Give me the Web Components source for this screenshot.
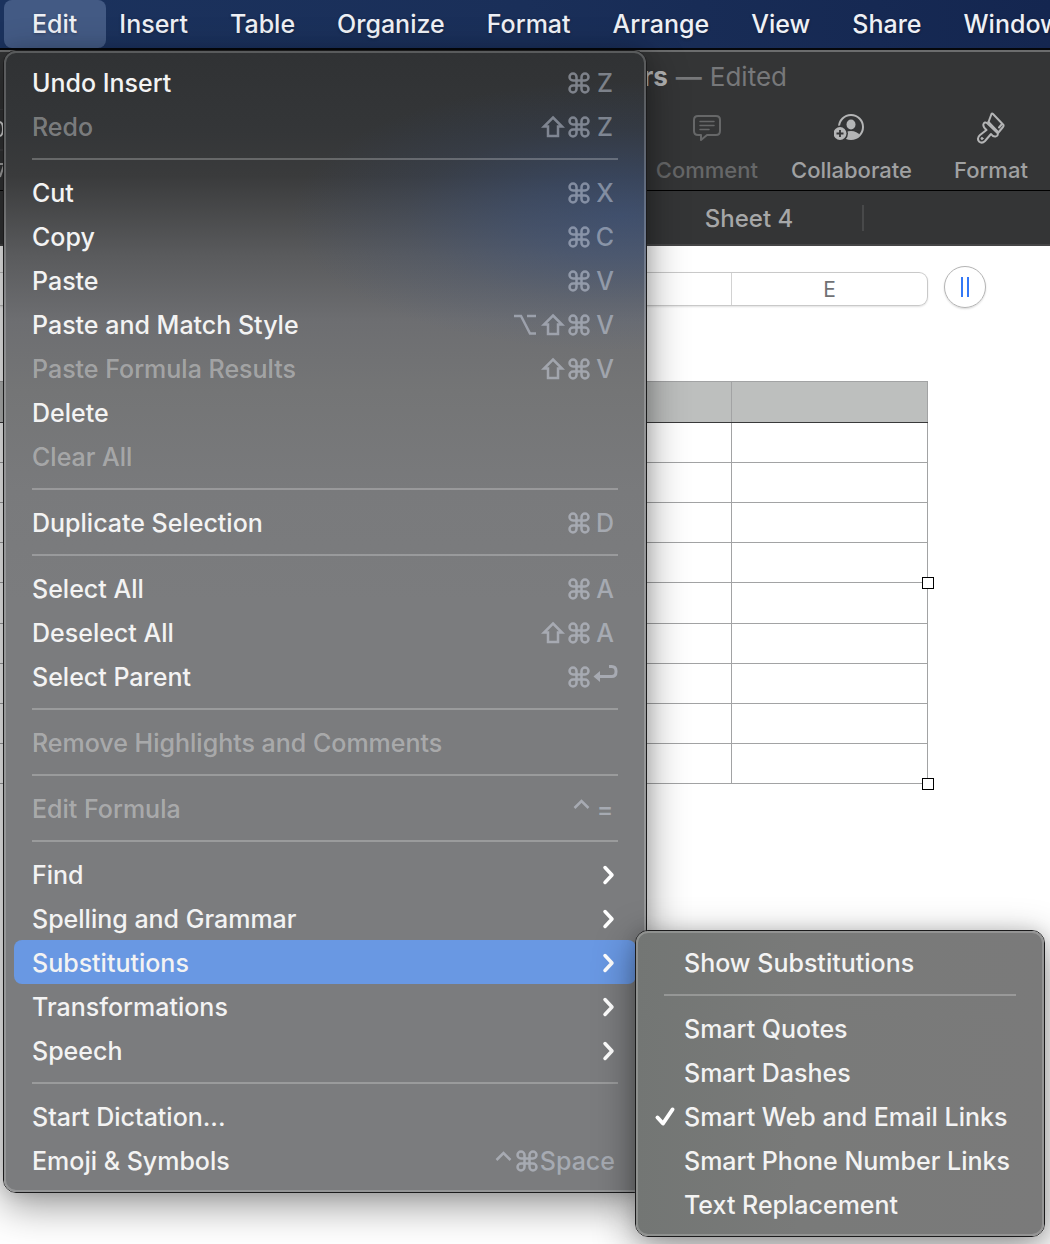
<!DOCTYPE html>
<html lang="en">
<head>
<meta charset="utf-8">
<title>Spreadsheet</title>
<style>
html,body{margin:0;min-height:100%;background:#fff;overflow-x:hidden}
body{font-family:Inter,"Liberation Sans",sans-serif;font-size:25px;line-height:30px;min-height:100vh}
</style>
</head>
<body>
<sheet-app></sheet-app>
<script>
const define=(name,html,setup)=>{
  const template=document.createElement('template');
  template.innerHTML=html;
  customElements.define(name,class extends HTMLElement{
    constructor(){super();this.attachShadow({mode:'open'}).append(template.content.cloneNode(true));}
    connectedCallback(){if(setup)setup(this,this.shadowRoot);}
  });
};
const reset='*{box-sizing:border-box}button{font:inherit;color:inherit;background:none;border:0;padding:0;margin:0;text-align:left;white-space:nowrap}';

/* one title in the menu bar */
define('bar-item',`<style>${reset}
:host{display:block;flex:none;margin-right:-15px}
button{display:block;height:48px;padding:0 29px 0 28px;border-radius:8px;font-weight:500;color:#eef0f5;text-shadow:0 1px 3px rgba(0,0,0,.3)}
:host([open]) button{background:#435a84}
</style><button type="button" aria-haspopup="menu"><slot></slot></button>`);

define('menu-bar',`<style>${reset}
:host{display:block;background:linear-gradient(90deg,#1b325d,#1a2f59 50%,#142650);border-bottom:2px solid #05070b;overflow:hidden}
nav{display:flex;height:48px;padding-left:4px}
</style><nav aria-label="Menu bar"><slot></slot></nav>`);

/* icon over a caption */
define('tool-button',`<style>${reset}
:host{display:block;flex:none;color:#b4b5b6}
:host([disabled]){color:#666768}
button{display:flex;flex-direction:column;align-items:center;gap:11px;min-width:92px;font-size:22px;line-height:28px;font-weight:500}
:host(:not([disabled])) .caption{color:#a0a1a2}
::slotted(svg){display:block;width:36px;height:36px}
</style><button type="button"><slot name="icon"></slot><span class="caption"><slot></slot></span></button>`,
(el,root)=>{root.querySelector('button').disabled=el.hasAttribute('disabled');});

define('window-header',`<style>${reset}
:host{display:block;background:#343536;border-top:2px solid #6c6d6e;border-bottom:1px solid #000;overflow:hidden}
.title{display:flex;justify-content:flex-end;gap:8px;height:50px;align-items:center;padding-right:263px;font-size:26px;color:#77787a}
b{color:#b2b3b4;font-weight:700}
.dash{font-weight:600}
.tools{display:flex;gap:33px;height:88px;padding:7px 13px 0 0}
.edge{flex:none;width:4px;height:80px;margin-right:auto}
</style>
<div class="title"><b>rs</b><span class="dash">—</span><span>Edited</span></div>
<div class="tools"><svg class="edge" viewBox="0 0 4 80" aria-hidden="true"><path d="M0 0h4M0 41h4" stroke="#4a4b4c"/><path d="M0 13q3 1 3 7t-3 7" fill="none" stroke="#ddd" stroke-width="2"/><path d="M0 55h4M4 56L0 68" stroke="#aaa" stroke-width="2"/></svg><slot></slot></div>`);

define('sheet-tabs',`<style>${reset}
:host{display:block;background:#343536;border-bottom:2px solid #464647}
.tabs{display:flex;justify-content:flex-end;align-items:center;height:53px;padding-right:186px}
button{width:228px;height:26px;line-height:28px;font-size:24px;font-weight:500;color:#a6a7a8;text-align:center;border-right:2px solid #48494a}
</style><div class="tabs" role="tablist"><button type="button" role="tab"><slot></slot></button></div>`);

define('column-ruler',`<style>${reset}
:host{display:flex;align-items:center;gap:16px;padding:20px 64px 0 0}
.cols{flex:1;display:flex;height:34px;margin-top:4px;border:1px solid #c9c9c9;border-left:0;border-radius:0 9px 9px 0;box-shadow:0 1px 2px rgba(0,0,0,.12)}
.cols span{display:block;font-size:21px;line-height:34px;color:#707174;text-align:center}
.cols span:first-child{flex:1}
.cols span:last-child{width:196px;border-left:1px solid #d2d2d2}
button{display:flex;align-items:center;justify-content:center;gap:4px;width:42px;height:42px;border-radius:50%;border:1px solid #b4b4b4;box-shadow:0 1px 2px rgba(0,0,0,.15)}
i{display:block;width:2px;height:20px;background:#3478f6}
</style><div class="cols"><span></span><span>E</span></div><button type="button" aria-label="Add column"><i></i><i></i></button>`);

define('sheet-grid',`<style>${reset}
:host{display:block;position:relative;margin:73px 122px 0 0}
table{width:100%;border-collapse:collapse;table-layout:fixed}
col:last-child{width:196px}
th,td{height:40px;padding:0;border:1px solid #a2a3a4}
th,tr:nth-child(5) td{height:41px}
th{background:#bdbfbe}
tr>:first-child{border-left:0}
thead th{border-bottom-color:#39393a}
.handle{position:absolute;right:-6px;width:12px;height:12px;background:#fff;border:1px solid #000}
.middle{top:calc(50% - 6px)}
.end{bottom:-6px}
</style><table><colgroup><col><col></colgroup><thead><tr><th></th><th></th></tr></thead><tbody></tbody></table>
<span class="handle middle"></span><span class="handle end"></span>`,
(el,root)=>{root.querySelector('tbody').innerHTML='<tr><td></td><td></td></tr>'.repeat(9);});

/* shortcut glyphs sit in fixed-width cells so that they line up down the menu */
const keyIcons={
 '⌘':'<path d="M10.500 10.500V7A3.500 3.500 0 1 0 7 10.500H19A3.500 3.500 0 1 0 15.500 7V19A3.500 3.500 0 1 0 19 15.500H7A3.500 3.500 0 1 0 10.500 19Z"/>',
 '⇧':'<path d="M13 3.500L22 12.500H18V22H8V12.500H4Z"/>',
 '⌥':'<path d="M0 4H7L16 21.500H22M13 4H22"/>',
 '^':'<path d="M4.500 12L11.500 5L18.500 12"/>',
 '↩':'<path d="M17 2.500H19.500Q24 2.500 24 7V8Q24 12.500 19.500 12.500H8" stroke-width="3"/><path d="M1.500 12.500L8 7V18Z" fill="currentColor" stroke="none"/>'
};
define('menu-item',`<style>${reset}
:host{display:block;color:#f3f3f3}
:host([disabled]){color:rgba(255,255,255,.37)}
button{display:flex;align-items:center;width:100%;height:44px;padding:2px 18px 0;border-radius:8px;font-weight:500}
:host([selected]) button{background:#6998e3}
.mark{display:none;flex:none;width:28px;margin-left:-8px}
:host([inset]) .mark{display:block}
.label{flex:1}
.keys{display:flex;align-items:center;color:rgba(222,230,245,.44)}
.keys span{min-width:26px;text-align:center}
.keys span.word{padding-right:3px}
.keys svg{display:block;width:26px;height:26px;fill:none;stroke:currentColor;stroke-width:2.5}
.keys svg.narrow{width:22px}
svg{display:block;overflow:visible}
.mark svg,.more svg{width:20px;height:24px;fill:none;stroke:#fff;stroke-width:3.500;stroke-linecap:round;stroke-linejoin:round}
.mark svg{stroke-width:4}
</style><button type="button" role="menuitem"><span class="mark"></span><span class="label"><slot></slot></span><span class="keys"></span><span class="more"></span></button>`,
(el,root)=>{
  const q=s=>root.querySelector(s),button=q('button');
  button.disabled=el.hasAttribute('disabled');
  const keys=el.getAttribute('keys')||'';
  q('.keys').innerHTML=(keys.match(/[⌘⇧⌥^↩]|[A-Za-z=]+/g)||[]).map(k=>keyIcons[k]
    ?`<svg class="${k==='^'?'narrow':''}" viewBox="0 0 ${k==='^'?22:26} 26" role="img" aria-label="${k}">${keyIcons[k]}</svg>`:`<span class="${k.length>1?'word':''}">${k}</span>`).join('');
  if(el.hasAttribute('submenu')){
    button.setAttribute('aria-haspopup','menu');
    q('.more').innerHTML='<svg viewBox="0 0 20 24" aria-hidden="true"><path d="M7 4.500L14 12L7 19.500"/></svg>';
  }
  if(el.hasAttribute('inset')){
    button.setAttribute('role','menuitemcheckbox');
    button.setAttribute('aria-checked',el.hasAttribute('checked'));
    if(el.hasAttribute('checked'))q('.mark').innerHTML='<svg viewBox="0 0 20 24" aria-hidden="true"><path d="M1.500 12.500L7 18.500L16.500 4.500"/></svg>';
  }
});

define('menu-rule',`<style>
:host{display:block;height:2px;margin:10px 18px;background:rgba(255,255,255,.24)}
</style>`);

define('pull-down',`<style>${reset}
:host{display:block;border:1px solid #1b1b1c;border-radius:13px;box-shadow:0 12px 40px rgba(0,0,0,.42),0 0 16px rgba(0,0,0,.12)}
div{border:2px solid rgba(255,255,255,.2);border-radius:12px;padding:7px 8px 8px;background:var(--menu-fill,#7a7b7a);background-clip:border-box;background-origin:border-box}
</style><div role="menu"><slot></slot></div>`);

define('sheet-app',`<style>${reset}
:host{display:block;position:relative;min-height:100vh;overflow:hidden}
.edit{position:absolute;left:3px;top:50px;width:644px;--menu-fill:
 radial-gradient(ellipse 330px 135px at 96% 165px,rgba(54,84,140,.5),rgba(54,84,140,.38) 30%,rgba(54,84,140,.14) 65%,rgba(54,84,140,0)),
 linear-gradient(#303234,#343638 80px,#3a3b3c 125px,#5a5b5d 205px,#6d6e71 270px,#747576 340px,#797a7c 440px,#7b7c7e 550px)}
.substitutions{position:absolute;left:635px;top:930px;width:410px;--menu-fill:linear-gradient(90deg,#737674,#797a79 40%,#7a7a7a)}
</style>
<menu-bar><bar-item open>Edit</bar-item><bar-item>Insert</bar-item><bar-item>Table</bar-item><bar-item>Organize</bar-item><bar-item>Format</bar-item><bar-item>Arrange</bar-item><bar-item>View</bar-item><bar-item>Share</bar-item><bar-item>Window</bar-item></menu-bar>
<window-header>
<tool-button disabled>Comment<svg slot="icon" viewBox="0 0 36 36" fill="none" stroke="currentColor" stroke-width="2" stroke-linejoin="round" stroke-linecap="round" aria-hidden="true"><path d="M9 7H27Q31 7 31 11V22Q31 26 27 26H18L12 31V26H9Q5 26 5 22V11Q5 7 9 7Z"/><path d="M11 12.500H25M11 16.500H25M11 20.500H20" stroke-width="1.500"/></svg></tool-button>
<tool-button>Collaborate<svg slot="icon" viewBox="0 0 36 36" aria-hidden="true"><circle cx="17" cy="18" r="12" fill="none" stroke="currentColor" stroke-width="2"/><ellipse cx="17" cy="15.500" rx="4.500" ry="5" fill="currentColor"/><path d="M8 26.500Q11 22 17 22T26 26.500Q17 33 8 26.500Z" fill="currentColor"/><circle cx="6" cy="24.500" r="8" fill="#343536"/><circle cx="6" cy="24.500" r="6.500" fill="currentColor"/><path d="M2.500 24.500H9.500M6 21V28" stroke="#343536" stroke-width="1.800"/></svg></tool-button>
<tool-button>Format<svg slot="icon" viewBox="0 0 36 36" fill="none" stroke="currentColor" stroke-width="2" stroke-linejoin="round" stroke-linecap="round" aria-hidden="true"><path d="M15.500 13L18.500 5Q19 4 20 5L30.500 16Q31 17 30 18L25 24"/><path d="M10.500 15Q11.500 12.500 14 14L24.500 24Q25.500 27 22.500 27.500Q20 28 18 25L12 32Q9 35 6 32.500Q3.500 29 7 26L13.500 21Q9.500 17.500 10.500 15Z"/><path d="M15.500 13L25 23M29 15L26 18.500"/><circle cx="9" cy="29.500" r="1" fill="currentColor" stroke-width="1"/></svg></tool-button>
</window-header>
<sheet-tabs>Sheet 4</sheet-tabs>
<column-ruler></column-ruler>
<sheet-grid></sheet-grid>
<pull-down class="edit" aria-label="Edit">
<menu-item keys="⌘Z">Undo Insert</menu-item>
<menu-item keys="⇧⌘Z" disabled>Redo</menu-item>
<menu-rule></menu-rule>
<menu-item keys="⌘X">Cut</menu-item>
<menu-item keys="⌘C">Copy</menu-item>
<menu-item keys="⌘V">Paste</menu-item>
<menu-item keys="⌥⇧⌘V">Paste and Match Style</menu-item>
<menu-item keys="⇧⌘V" disabled>Paste Formula Results</menu-item>
<menu-item>Delete</menu-item>
<menu-item disabled>Clear All</menu-item>
<menu-rule></menu-rule>
<menu-item keys="⌘D">Duplicate Selection</menu-item>
<menu-rule></menu-rule>
<menu-item keys="⌘A">Select All</menu-item>
<menu-item keys="⇧⌘A">Deselect All</menu-item>
<menu-item keys="⌘↩">Select Parent</menu-item>
<menu-rule></menu-rule>
<menu-item disabled>Remove Highlights and Comments</menu-item>
<menu-rule></menu-rule>
<menu-item keys="^=" disabled>Edit Formula</menu-item>
<menu-rule></menu-rule>
<menu-item submenu>Find</menu-item>
<menu-item submenu>Spelling and Grammar</menu-item>
<menu-item submenu selected>Substitutions</menu-item>
<menu-item submenu>Transformations</menu-item>
<menu-item submenu>Speech</menu-item>
<menu-rule></menu-rule>
<menu-item>Start Dictation...</menu-item>
<menu-item keys="^⌘Space">Emoji &amp; Symbols</menu-item>
</pull-down>
<pull-down class="substitutions" aria-label="Substitutions">
<menu-item inset>Show Substitutions</menu-item>
<menu-rule></menu-rule>
<menu-item inset>Smart Quotes</menu-item>
<menu-item inset>Smart Dashes</menu-item>
<menu-item inset checked>Smart Web and Email Links</menu-item>
<menu-item inset>Smart Phone Number Links</menu-item>
<menu-item inset>Text Replacement</menu-item>
</pull-down>`);
</script>
</body>
</html>
